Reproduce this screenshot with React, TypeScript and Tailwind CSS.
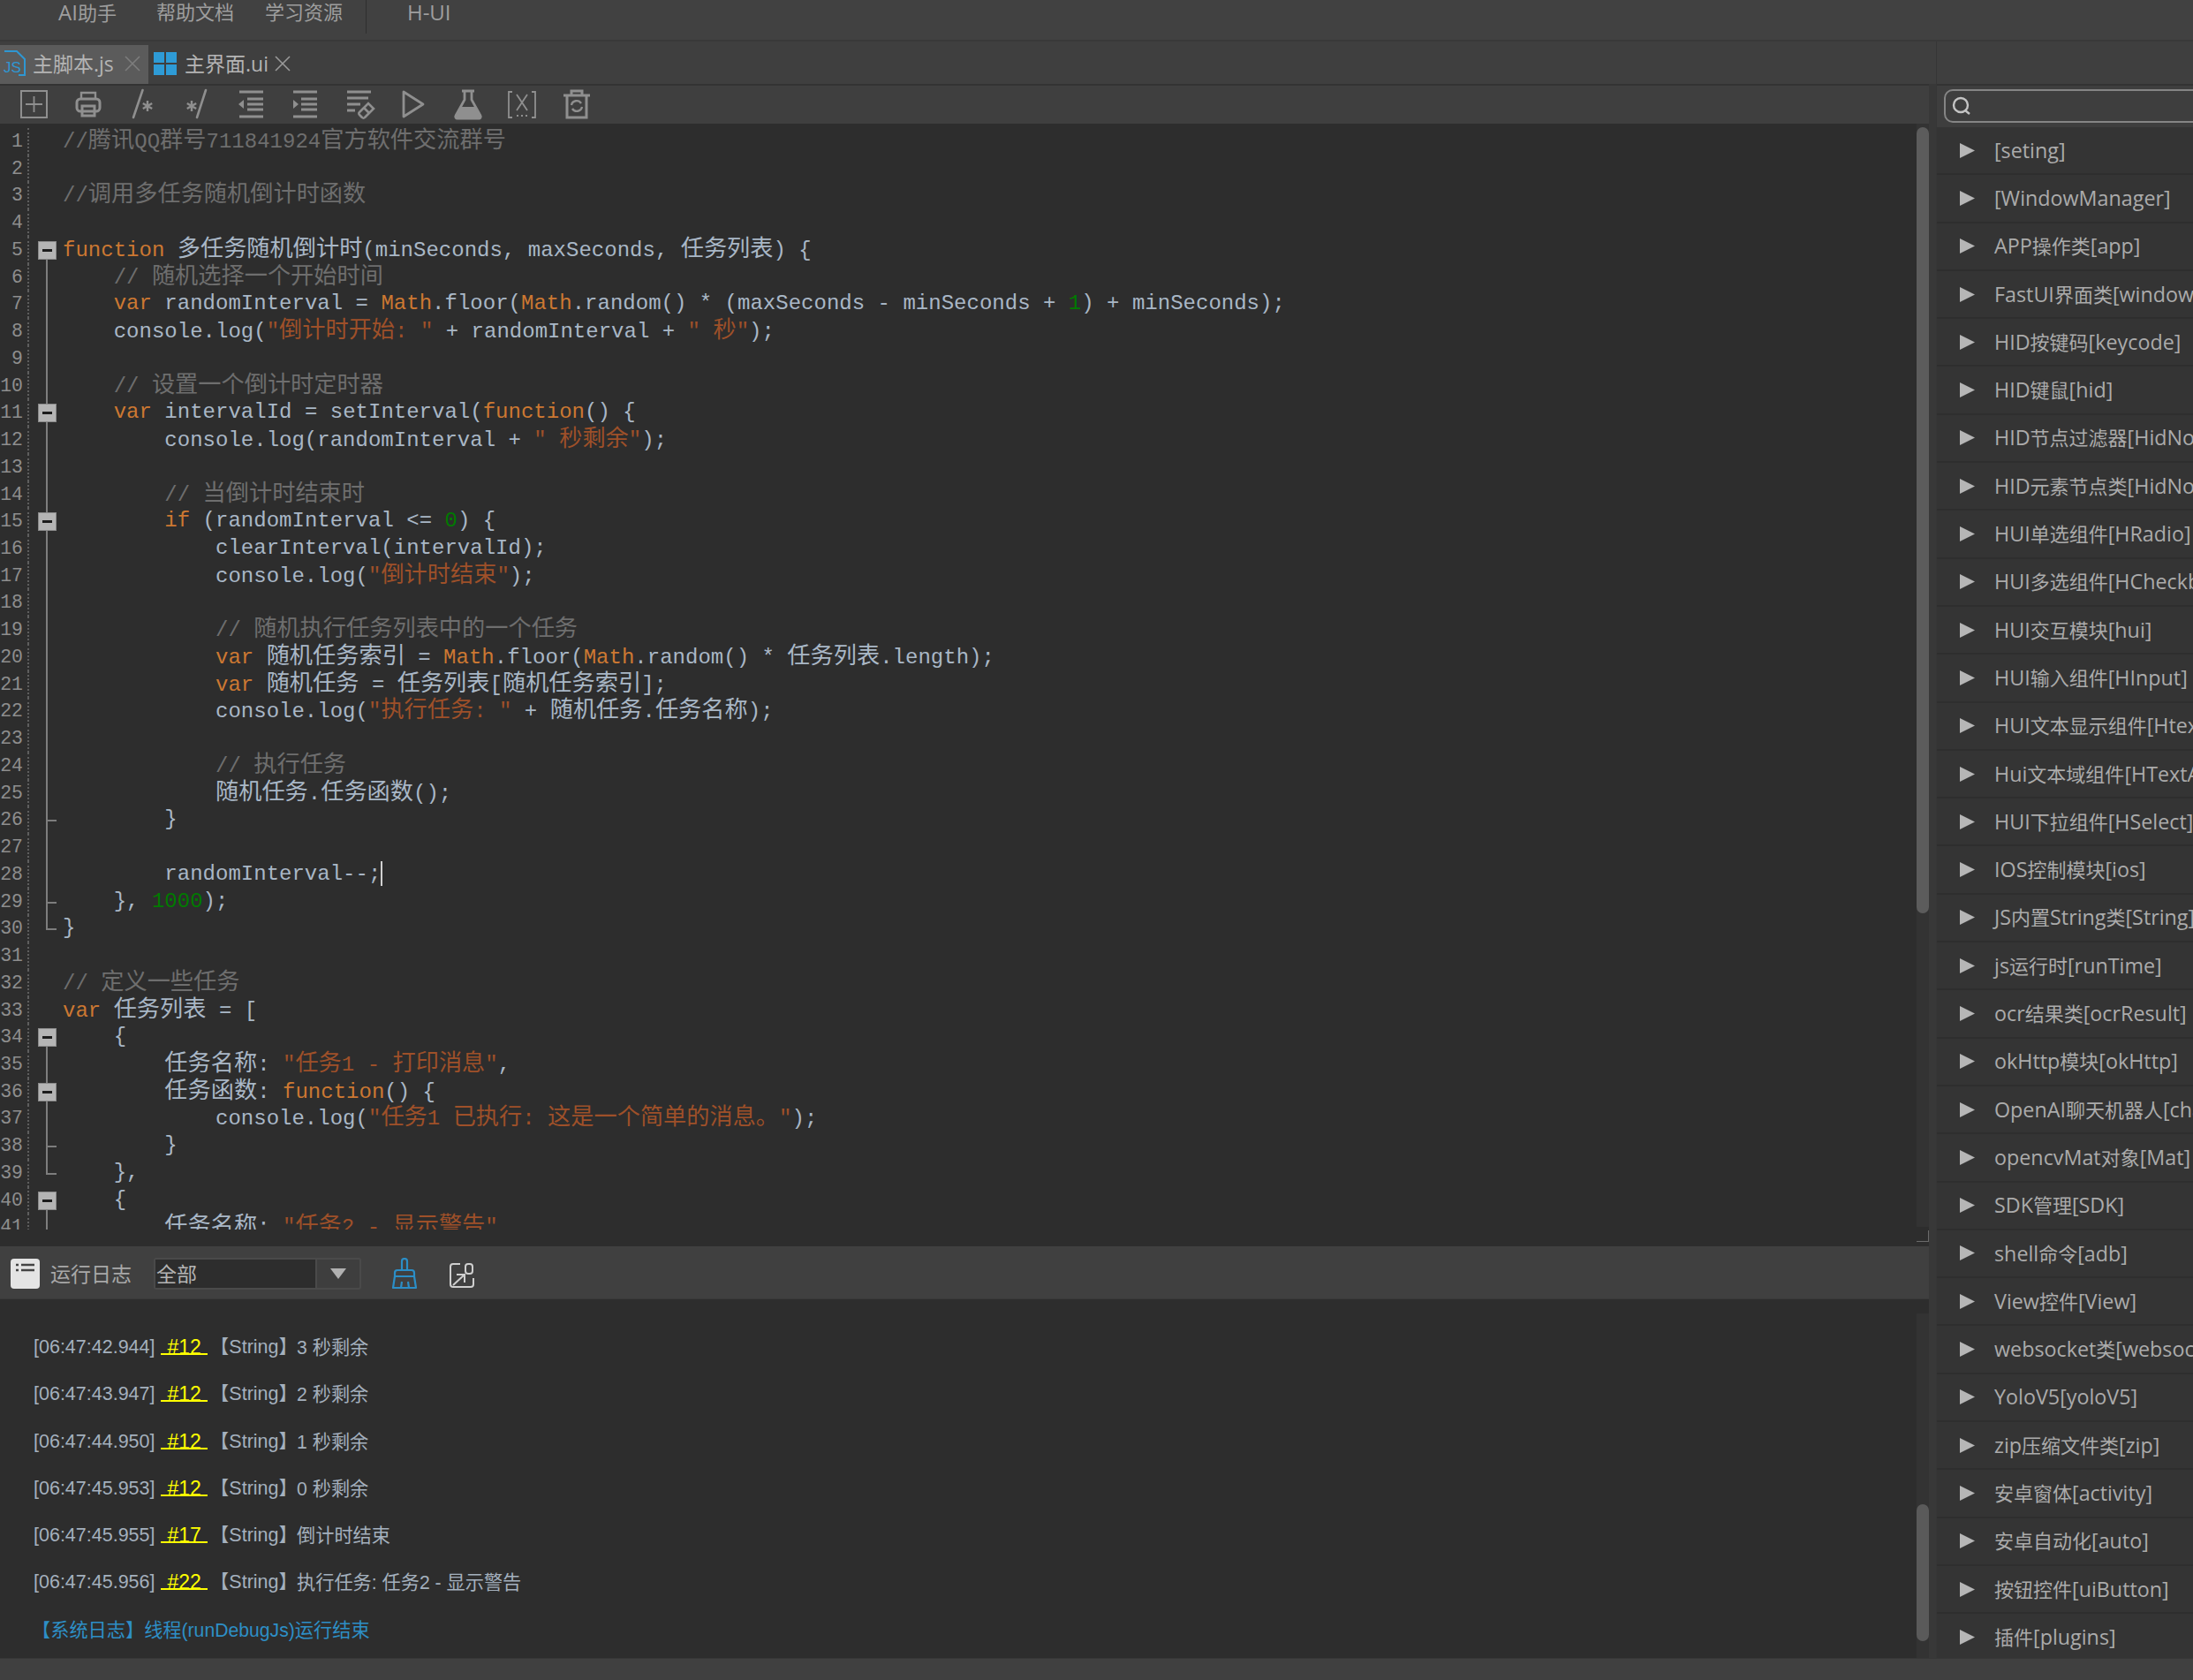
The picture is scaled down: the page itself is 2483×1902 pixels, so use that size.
import React from "react";

const uiFont = "font-['Open_Sans','Noto_Sans_CJK_SC',sans-serif]";

const code = [
  "//腾讯QQ群号711841924官方软件交流群号",
  "",
  "//调用多任务随机倒计时函数",
  "",
  "function 多任务随机倒计时(minSeconds, maxSeconds, 任务列表) {",
  "    // 随机选择一个开始时间",
  "    var randomInterval = Math.floor(Math.random() * (maxSeconds - minSeconds + 1) + minSeconds);",
  '    console.log("倒计时开始: " + randomInterval + " 秒");',
  "",
  "    // 设置一个倒计时定时器",
  "    var intervalId = setInterval(function() {",
  '        console.log(randomInterval + " 秒剩余");',
  "",
  "        // 当倒计时结束时",
  "        if (randomInterval <= 0) {",
  "            clearInterval(intervalId);",
  '            console.log("倒计时结束");',
  "",
  "            // 随机执行任务列表中的一个任务",
  "            var 随机任务索引 = Math.floor(Math.random() * 任务列表.length);",
  "            var 随机任务 = 任务列表[随机任务索引];",
  '            console.log("执行任务: " + 随机任务.任务名称);',
  "",
  "            // 执行任务",
  "            随机任务.任务函数();",
  "        }",
  "",
  "        randomInterval--;",
  "    }, 1000);",
  "}",
  "",
  "// 定义一些任务",
  "var 任务列表 = [",
  "    {",
  '        任务名称: "任务1 - 打印消息",',
  "        任务函数: function() {",
  '            console.log("任务1 已执行: 这是一个简单的消息。");',
  "        }",
  "    },",
  "    {",
  '        任务名称: "任务2 - 显示警告",',
];

// fold gutter, by line number
const foldBox = [5, 11, 15, 34, 36, 40];
const foldTick = [26, 29, 38];
const foldEnd = [30, 39];

function foldLine(n: number) {
  return (n > 5 && n < 30) || (n > 34 && n < 39) || n === 41;
}

function Cjk({ text, cls = "text-[26.2px]" }: { text: string; cls?: string }) {
  const parts = text.split(/([\u3000-\u9fff\uff00-\uffef]+)/);
  return (
    <>
      {parts.map((p, i) =>
        i % 2 === 1 ? (
          <span key={i} className={cls}>
            {p}
          </span>
        ) : (
          <span key={i}>{p}</span>
        ),
      )}
    </>
  );
}

function Highlight({ line }: { line: string }) {
  const re = /(\/\/.*)|("[^"]*")|\b(function|var|if|Math)\b|\b(\d+)\b/g;
  const out: React.ReactNode[] = [];
  let last = 0;
  let m: RegExpExecArray | null;
  while ((m = re.exec(line))) {
    if (m.index > last) out.push(<Cjk key={last} text={line.slice(last, m.index)} />);
    const color = m[1]
      ? "text-[#6e6e6e]"
      : m[2]
        ? "text-[#9e5029]"
        : m[3]
          ? "text-[#cc7832]"
          : "text-[#007a00]";
    out.push(
      <span key={m.index} className={color}>
        <Cjk text={m[0]} />
      </span>,
    );
    last = m.index + m[0].length;
  }
  if (last < line.length) out.push(<Cjk key={last} text={line.slice(last)} />);
  return <>{out}</>;
}

function CodeRow({ line, n }: { line: string; n: number }) {
  return (
    <div className="flex h-[30.74px] leading-[30.74px]">
      <div className="w-[26px] shrink-0 flex justify-end overflow-hidden text-[#8e8e8e] text-[21.5px]">{n}</div>
      <div className="w-[12px] shrink-0 ml-[5px] border-l-2 border-dotted border-[#5e5e5e]" />
      <div className="relative w-[21px] shrink-0 mr-[7px]">
        {foldLine(n) && <div className="absolute left-[9px] top-0 bottom-0 w-[2px] bg-[#7d7d7d]" />}
        {foldBox.includes(n) && (
          <>
            {n !== 5 && n !== 34 && n !== 40 && <div className="absolute left-[9px] top-0 h-[5px] w-[2px] bg-[#7d7d7d]" />}
            <div className="absolute left-[9px] top-[25px] bottom-0 w-[2px] bg-[#7d7d7d]" />
            <div className="absolute left-0 top-[5px] w-[21px] h-[21px] bg-[#b4b4b4] border border-[#8a8a8a] flex items-center justify-center">
              <div className="w-[11px] h-[3px] bg-[#1c1c1c]" />
            </div>
          </>
        )}
        {foldTick.includes(n) && <div className="absolute left-[9px] top-[15px] h-[2px] w-[12px] bg-[#7d7d7d]" />}
        {foldEnd.includes(n) && (
          <>
            <div className="absolute left-[9px] top-0 h-[17px] w-[2px] bg-[#7d7d7d]" />
            <div className="absolute left-[9px] top-[15px] h-[2px] w-[12px] bg-[#7d7d7d]" />
          </>
        )}
      </div>
      <div className="whitespace-pre text-[#a9b7c6] tracking-[0.012px]">
        <Highlight line={line} />
        {n === 28 && <span className="inline-block w-[2px] h-[28px] align-middle bg-[#d0d0d0]" />}
      </div>
    </div>
  );
}

function Icon({ children }: { children: React.ReactNode }) {
  return (
    <div className="w-[61.4px] shrink-0 flex items-center justify-center">
      <svg width="36" height="36" viewBox="0 0 36 36" fill="none" stroke="#8f8f8f" strokeWidth="2.4">
        {children}
      </svg>
    </div>
  );
}

function Toolbar() {
  return (
    <div className="h-[45px] border-t-2 border-[#333333] bg-[#3f3f3f] flex items-center pl-[8px] pb-[2px]">
      <Icon>
        <rect x="3" y="3" width="29" height="30" strokeWidth="2" />
        <path d="M17.5 9v18M8 18h19" strokeWidth="1.8" />
      </Icon>
      <Icon>
        <path d="M10 12V5h16v7" />
        <rect x="5" y="12" width="26" height="14" rx="4" strokeWidth="3" />
        <rect x="11" y="20" width="14" height="11" strokeWidth="3" />
      </Icon>
      <Icon>
        <path d="M18.5 2 8 33" strokeWidth="2.6" strokeLinecap="round" />
        <path d="M24 14v12M18.8 17l10.4 6M29.2 17l-10.4 6" strokeWidth="2.4" />
      </Icon>
      <Icon>
        <path d="M28 2 18 33" strokeWidth="2.6" strokeLinecap="round" />
        <path d="M12 14v12M6.8 17l10.4 6M17.2 17l-10.4 6" strokeWidth="2.4" />
      </Icon>
      <Icon>
        <path d="M5 4h27M14 12h18M14 18h18M14 24h18M5 32h27" strokeWidth="3" />
        <path d="M10 13v10l-6-5z" fill="#8f8f8f" stroke="none" />
      </Icon>
      <Icon>
        <path d="M4 4h27M13 12h18M13 18h18M13 24h18M4 32h27" strokeWidth="3" />
        <path d="M4 13v10l6-5z" fill="#8f8f8f" stroke="none" />
      </Icon>
      <Icon>
        <path d="M4 4h27M4 11h24M4 18h15M4 25h9" strokeWidth="3" />
        <path d="M18 27l10-10 6 6-10 10a2 2 0 0 1-3 0l-3-3a2 2 0 0 1 0-3z" strokeWidth="2.6" />
        <path d="M23 22l6 6" strokeWidth="2.6" />
      </Icon>
      <Icon>
        <path d="M7 4v28l22-14z" strokeLinejoin="round" strokeWidth="2.8" />
      </Icon>
      <Icon>
        <path d="M11 3h14M14 3v10L4 31a2 2 0 0 0 2 3h24a2 2 0 0 0 2-3L22 13V3" strokeWidth="2.8" />
        <path d="M9 21h18l6 13H3z" fill="#8f8f8f" stroke="none" />
      </Icon>
      <Icon>
        <path d="M7 4H3v29h4M29 4h4v29h-4" strokeWidth="1.8" />
        <path d="M12 7l12 18M24 7 12 25" strokeWidth="1.8" />
        <path d="M12 31h2M17 31h2M22 31h2" strokeWidth="2" />
      </Icon>
      <Icon>
        <path d="M3 8h30M12 8V3h12v5" strokeWidth="3" />
        <path d="M7 8v25h22V8" strokeWidth="3" />
        <path d="M12 19a6 6 0 0 1 11-2M24 21a6 6 0 0 1-11 2" strokeWidth="2.4" />
      </Icon>
    </div>
  );
}

const logs = [
  ["[06:47:42.944]", "#12", "3 秒剩余"],
  ["[06:47:43.947]", "#12", "2 秒剩余"],
  ["[06:47:44.950]", "#12", "1 秒剩余"],
  ["[06:47:45.953]", "#12", "0 秒剩余"],
  ["[06:47:45.955]", "#17", "倒计时结束"],
  ["[06:47:45.956]", "#22", "执行任务: 任务2 - 显示警告"],
];

const modules = [
  "[seting]",
  "[WindowManager]",
  "APP操作类[app]",
  "FastUI界面类[windowUI]",
  "HID按键码[keycode]",
  "HID键鼠[hid]",
  "HID节点过滤器[HidNodeFilter]",
  "HID元素节点类[HidNode]",
  "HUI单选组件[HRadio]",
  "HUI多选组件[HCheckbox]",
  "HUI交互模块[hui]",
  "HUI输入组件[HInput]",
  "HUI文本显示组件[Htext]",
  "Hui文本域组件[HTextArea]",
  "HUI下拉组件[HSelect]",
  "IOS控制模块[ios]",
  "JS内置String类[String]",
  "js运行时[runTime]",
  "ocr结果类[ocrResult]",
  "okHttp模块[okHttp]",
  "OpenAI聊天机器人[chatgpt]",
  "opencvMat对象[Mat]",
  "SDK管理[SDK]",
  "shell命令[adb]",
  "View控件[View]",
  "websocket类[websocket]",
  "YoloV5[yoloV5]",
  "zip压缩文件类[zip]",
  "安卓窗体[activity]",
  "安卓自动化[auto]",
  "按钮控件[uiButton]",
  "插件[plugins]",
];

export default function App() {
  return (
    <div className={`w-[2483px] h-[1902px] overflow-hidden flex flex-col bg-[#3f3f3f] text-[#a8a8a8] ${uiFont}`}>
      {/* menu */}
      <div className="h-[47px] shrink-0 bg-[#414141] border-b-2 border-[#393939] flex items-start text-[24px] leading-[27px] text-[#9e9e9e]">
        <span className="ml-[66px]">
          <Cjk text="AI助手" cls="text-[22px]" />
        </span>
        <span className="ml-[45px] text-[22px]">帮助文档</span>
        <span className="ml-[35px] text-[22px]">学习资源</span>
        <div className="ml-[26px] w-[1px] h-[38px] bg-[#2f2f2f]" />
        <span className="ml-[46px]">H-UI</span>
      </div>

      <div className="flex-1 min-h-0 flex">
        {/* left */}
        <div className="w-[2192px] shrink-0 flex flex-col pr-[8px] bg-[#383838]">
          <div className="h-[48px] shrink-0 bg-[#3f3f3f] flex items-end -mr-[8px]">
            <div className="w-[168px] h-[44px] bg-[#5b5b5b] flex items-center pb-[2px]">
              <svg width="28" height="30" viewBox="0 0 28 30" fill="none" stroke="#2f97d2" strokeWidth="2" className="ml-[2px]">
                <path d="M3 1h14l9 9v18h-7" />
                <text x="2" y="25" fontSize="17" fill="#2f97d2" stroke="none" fontFamily="Liberation Sans">JS</text>
              </svg>
              <span className="ml-[7px] text-[23px] text-[#b4b4b4]">主脚本.js</span>
              <svg width="18" height="18" viewBox="0 0 18 18" stroke="#7d7d7d" strokeWidth="1.6" className="ml-[12px]">
                <path d="M1 1l16 16M17 1 1 17" />
              </svg>
            </div>
            <div className="h-[44px] flex items-center pb-[2px]">
              <div className="ml-[6px] grid grid-cols-2 gap-[2px] w-[26px] h-[26px]">
                <div className="bg-[#2e9bd6]" />
                <div className="bg-[#2e9bd6]" />
                <div className="bg-[#2e9bd6]" />
                <div className="bg-[#2e9bd6]" />
              </div>
              <span className="ml-[9px] text-[23px] text-[#b4b4b4]">主界面.ui</span>
              <svg width="18" height="18" viewBox="0 0 18 18" stroke="#9a9a9a" strokeWidth="1.6" className="ml-[7px]">
                <path d="M1 1l16 16M17 1 1 17" />
              </svg>
            </div>
          </div>
          <Toolbar />

          {/* editor */}
          <div className="h-[1271px] shrink-0 bg-[#2d2d2d] flex">
            <div className="flex-1 min-w-0 h-[1252px] overflow-hidden pt-[5px] text-[24px] font-['Liberation_Mono','Noto_Sans_CJK_SC',monospace]">
              {code.map((line, i) => (
                <CodeRow key={i} line={line} n={i + 1} />
              ))}
            </div>
            <div className="w-[14px] shrink-0 flex flex-col">
              <div className="h-[1249px] bg-[#333333] pt-[4px]">
                <div className="h-[890px] rounded-[7px] bg-[#5c5c5c]" />
              </div>
              <div className="ml-[0px] mt-[4px] w-[14px] h-[13px] border-r border-b border-[#6a6a6a]" />
            </div>
          </div>

          {/* log header */}
          <div className="h-[60px] shrink-0 bg-[#404040] border-b border-[#3a3a3a] flex items-center pt-[3px]">
            <svg width="34" height="34" viewBox="0 0 34 34" className="ml-[12px]">
              <rect x="0" y="0" width="33" height="34" rx="4" fill="#e4e4e4" />
              <path d="M6 7h3M12 7h15M6 13h3M12 13h15" stroke="#444" strokeWidth="2.4" />
            </svg>
            <span className="ml-[11px] text-[23px] text-[#a8a8a8]">运行日志</span>
            <div className="ml-[25px] w-[235px] h-[36px] flex items-center rounded-[3px] border-2 border-[#4a4a4a] bg-[#3e3e3e]">
              <div className="w-[181px] h-full bg-[#2d2d2d] flex items-center text-[23px] leading-none text-[#b4b4b4] pl-[1px]">全部</div>
              <div className="flex-1 h-full border-l-2 border-[#4a4a4a] flex items-center justify-center">
                <svg width="18" height="12" viewBox="0 0 18 12">
                  <path d="M0 0h18l-9 12z" fill="#b0b0b0" />
                </svg>
              </div>
            </div>
            <svg width="30" height="36" viewBox="0 0 30 36" fill="none" stroke="#2b8ec6" strokeWidth="2.2" strokeLinejoin="round" className="ml-[34px]">
              <path d="M12 14V4a3 3 0 0 1 6 0v10M4 17a3 3 0 0 1 3-3h16a3 3 0 0 1 3 3v4H4zM4 21 2 34h26l-2-13M11 34l1-7M20 34l-1-7" />
            </svg>
            <svg width="30" height="30" viewBox="0 0 30 30" fill="none" stroke="#cfcfcf" strokeWidth="2" className="ml-[35px] mt-[4px]">
              <path d="M13 2H5a3 3 0 0 0-3 3v20a3 3 0 0 0 3 3h20a3 3 0 0 0 3-3v-7" />
              <rect x="19" y="2" width="8" height="11" rx="3" />
              <path d="M5 26 18 14M9 14h9v9" />
            </svg>
          </div>

          {/* log */}
          <div className="flex-1 min-h-0 bg-[#2d2d2d] flex">
            <div className="flex-1 min-w-0 pt-[28px] pl-[38px] text-[21.5px] leading-[53.3px] font-['Liberation_Sans','Noto_Sans_CJK_SC',sans-serif] text-[#a4b0bd]">
              {logs.map((l) => (
                <div key={l[0]} className="h-[53.3px] flex whitespace-pre">
                  <span>{l[0]}</span>
                  <span className="ml-[7px] mt-[10px] h-[25px] leading-[33px] px-[7px] text-[23px] text-[#ffff00] border-b-2 border-[#ffff00]">{l[1]}</span>
                  <span className="ml-[3px]">【String】</span>
                  <span className="-ml-[1px] text-[21.2px]">{l[2]}</span>
                </div>
              ))}
              <div className="h-[53.3px] -ml-[2px] text-[21.2px] text-[#2d8fc6]">【系统日志】线程(runDebugJs)运行结束</div>
            </div>
            <div className="w-[14px] shrink-0 mt-[16px] pt-[216px] bg-[#333333]">
              <div className="h-[155px] rounded-[7px] bg-[#5a5a5a]" />
            </div>
          </div>
        </div>

        {/* right */}
        <div className="flex-1 min-w-0 flex flex-col overflow-hidden border-l border-[#363636]">
          <div className="h-[48px] shrink-0 bg-[#3f3f3f]" />
          <div className="h-[49px] shrink-0 bg-[#3e3e3e] flex items-center pl-[8px] pb-[2px] border-t-2 border-[#333333]">
            <div className="w-[340px] shrink-0 h-[38px] rounded-[10px] border-2 border-[#858585] flex items-center pl-[7px]">
              <svg width="22" height="22" viewBox="0 0 22 22" fill="none" stroke="#c4c4c4" strokeWidth="2.4">
                <circle cx="10" cy="10" r="8" />
                <path d="M15 16l5 4" />
              </svg>
            </div>
          </div>
          <div className="flex-1 min-h-0 overflow-hidden bg-[#343434] text-[23.3px] text-[#ababab]">
            {modules.map((m) => (
              <div key={m} className="h-[54.3px] flex items-center border-b-2 border-[#2e2e2e] whitespace-nowrap">
                <svg width="17" height="17" viewBox="0 0 17 17" className="ml-[26px] shrink-0">
                  <path d="M0 0l17 8.5L0 17z" fill="#b6b6b6" />
                </svg>
                <span className="ml-[22px]">
                  <Cjk text={m} cls="text-[22px]" />
                </span>
              </div>
            ))}
          </div>
        </div>
      </div>

      <div className="h-[25px] shrink-0 bg-[#404040] border-t border-[#363636]" />
    </div>
  );
}
